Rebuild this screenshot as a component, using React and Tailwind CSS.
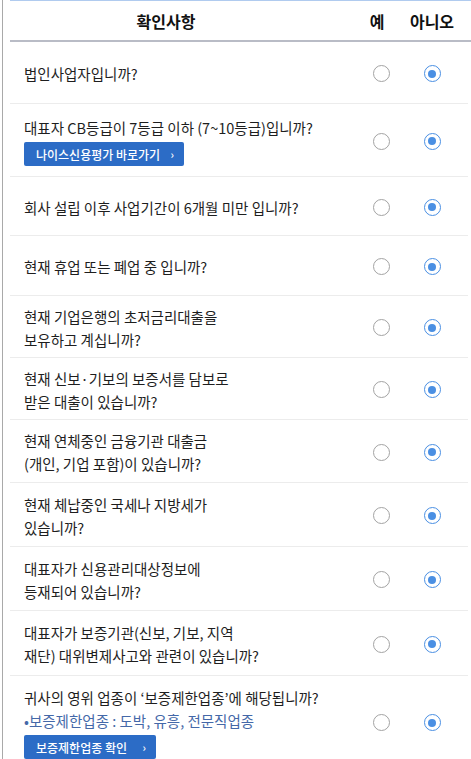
import React from "react";

const questions = [
  { lines: ["법인사업자입니까?"], h: "h-[62px]" },
  { lines: ["대표자 CB등급이 7등급 이하 (7~10등급)입니까?"], button: { label: "나이스신용평가 바로가기", w: "w-[160px]" }, h: "h-[73px]" },
  { lines: ["회사 설립 이후 사업기간이 6개월 미만 입니까?"], h: "h-[59px]" },
  { lines: ["현재 휴업 또는 폐업 중 입니까?"], h: "h-[60px]" },
  { lines: ["현재 기업은행의 초저금리대출을", "보유하고 계십니까?"], h: "h-[62px]" },
  { lines: ["현재 신보·기보의 보증서를 담보로", "받은 대출이 있습니까?"], h: "h-[62px]" },
  { lines: ["현재 연체중인 금융기관 대출금", "(개인, 기업 포함)이 있습니까?"], h: "h-[63px]" },
  { lines: ["현재 체납중인 국세나 지방세가", "있습니까?"], h: "h-[64px]" },
  { lines: ["대표자가 신용관리대상정보에", "등재되어 있습니까?"], h: "h-[64px]" },
  { lines: ["대표자가 보증기관(신보, 기보, 지역", "재단) 대위변제사고와 관련이 있습니까?"], h: "h-[65px]" },
  {
    lines: ["귀사의 영위 업종이 ‘보증제한업종’에 해당됩니까?"],
    note: "•보증제한업종 : 도박, 유흥, 전문직업종",
    button: { label: "보증제한업종 확인", w: "w-[132px]" },
    h: "h-[92px]",
  },
];

const Radio = ({ checked }) =>
  checked ? (
    <span className="flex h-[17px] w-[17px] items-center justify-center rounded-full border-[1.5px] border-[#4a8fe3]">
      <span className="h-[8px] w-[8px] rounded-full bg-[#4a8fe3]" />
    </span>
  ) : (
    <span className="block h-[17px] w-[17px] rounded-full border-[1.5px] border-[#a3a3a3]" />
  );

const BlueButton = ({ label, w }) => (
  <div className={`mt-[3px] flex h-[24px] ${w} items-center justify-between rounded-[2px] bg-[#2c6cc6] pl-[12px] pr-[10px] text-[12px] font-medium text-white`}>
    <span>{label}</span>
    <span className="text-[11px]">›</span>
  </div>
);

export default function App() {
  return (
    <div
      className="ml-[2px] min-h-screen border-l border-[#a9a9a9] bg-white pl-[7px] text-[#1e1e1e]"
      style={{ fontFamily: '"Noto Sans CJK KR", "Noto Sans", sans-serif' }}
    >
      <div className="border-t border-[#b0cbef]">
        {/* Header */}
        <div className="flex h-[41px] items-center border-b-2 border-[#b9bcc6] text-[16px] font-bold text-[#111]">
          <div className="flex-1 pr-[34px] text-center">확인사항</div>
          <div className="w-[50px] pr-[8px] text-center">예</div>
          <div className="w-[52px] text-center">아니오</div>
          <div className="w-[13px]" />
        </div>

        {/* Rows */}
        {questions.map((q, i) => (
          <div
            key={i}
            className={`mr-[3px] flex ${q.h} items-center border-b border-[#ececec]`}
          >
            <div className="flex flex-1 flex-col items-start pl-[14px] pt-[2px] text-[14.5px] leading-[23px]">
              {q.lines.map((l, j) => (
                <div key={j}>{l}</div>
              ))}
              {q.note && <div className="text-[#4468a8]">{q.note}</div>}
              {q.button && <BlueButton {...q.button} />}
            </div>
            <div className="flex w-[50px] justify-center pt-[2px]">
              <Radio />
            </div>
            <div className="flex w-[52px] justify-center pt-[2px]">
              <Radio checked />
            </div>
            <div className="w-[10px]" />
          </div>
        ))}
      </div>
    </div>
  );
}
